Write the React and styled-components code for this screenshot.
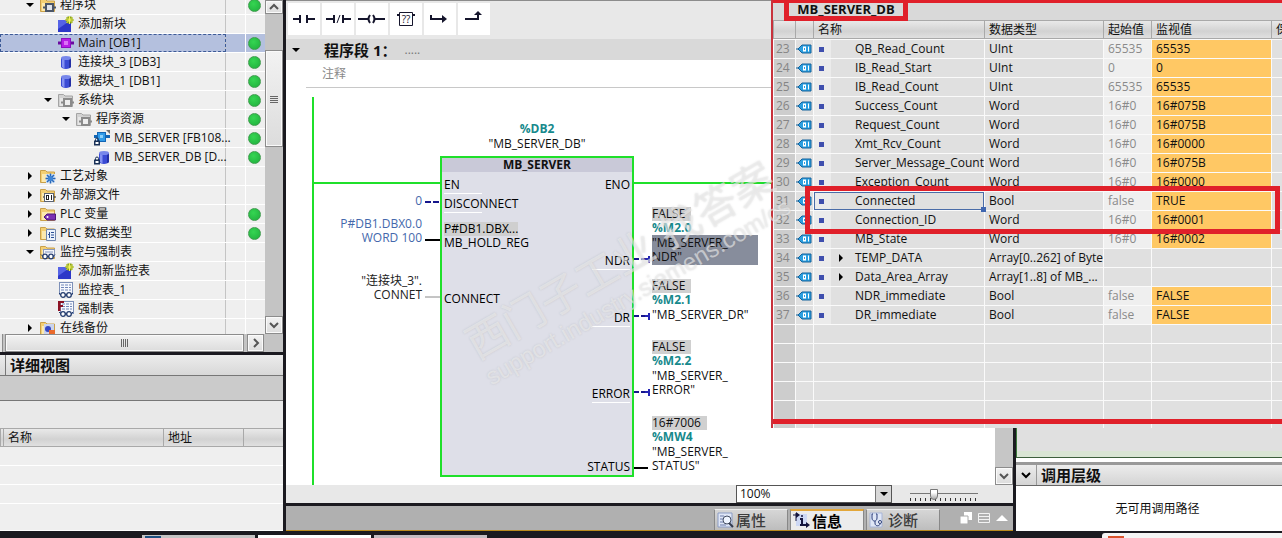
import React from 'react';
import styled, { createGlobalStyle, css } from 'styled-components';

const GREEN = '#1fe02a';
const RED = '#e0202a';

const treeItems = [
  { level: 0, open: true, icon: 'blocks', label: '程序块', dot: true },
  { level: 1, icon: 'add', label: '添加新块' },
  { level: 1, icon: 'ob', label: 'Main [OB1]', dot: true, selected: true },
  { level: 1, icon: 'db', label: '连接块_3 [DB3]', dot: true },
  { level: 1, icon: 'db', label: '数据块_1 [DB1]', dot: true },
  { level: 1, open: true, icon: 'system', label: '系统块', dot: true },
  { level: 2, open: true, icon: 'system', label: '程序资源', dot: true },
  { level: 3, icon: 'fbLocked', label: 'MB_SERVER [FB108...', dot: true },
  { level: 3, icon: 'dbLocked', label: 'MB_SERVER_DB [D...', dot: true },
  { level: 0, open: false, icon: 'tech', label: '工艺对象' },
  { level: 0, open: false, icon: 'source', label: '外部源文件' },
  { level: 0, open: false, icon: 'tags', label: 'PLC 变量', dot: true },
  { level: 0, open: false, icon: 'types', label: 'PLC 数据类型', dot: true },
  { level: 0, open: true, icon: 'watchFolder', label: '监控与强制表' },
  { level: 1, icon: 'add', label: '添加新监控表' },
  { level: 1, icon: 'watch', label: '监控表_1' },
  { level: 1, icon: 'force', label: '强制表' },
  { level: 0, open: false, icon: 'backup', label: '在线备份' },
];

const dbRows = [
  { no: 23, name: 'QB_Read_Count', type: 'UInt', start: '65535', value: '65535' },
  { no: 24, name: 'IB_Read_Start', type: 'UInt', start: '0', value: '0' },
  { no: 25, name: 'IB_Read_Count', type: 'UInt', start: '65535', value: '65535' },
  { no: 26, name: 'Success_Count', type: 'Word', start: '16#0', value: '16#075B' },
  { no: 27, name: 'Request_Count', type: 'Word', start: '16#0', value: '16#075B' },
  { no: 28, name: 'Xmt_Rcv_Count', type: 'Word', start: '16#0', value: '16#0000' },
  { no: 29, name: 'Server_Message_Count', type: 'Word', start: '16#0', value: '16#075B' },
  { no: 30, name: 'Exception_Count', type: 'Word', start: '16#0', value: '16#0000' },
  { no: 31, name: 'Connected', type: 'Bool', start: 'false', value: 'TRUE', active: true },
  { no: 32, name: 'Connection_ID', type: 'Word', start: '16#0', value: '16#0001' },
  { no: 33, name: 'MB_State', type: 'Word', start: '16#0', value: '16#0002' },
  { no: 34, name: 'TEMP_DATA', type: 'Array[0..262] of Byte', expandable: true },
  { no: 35, name: 'Data_Area_Array', type: 'Array[1..8] of MB_...', expandable: true },
  { no: 36, name: 'NDR_immediate', type: 'Bool', start: 'false', value: 'FALSE' },
  { no: 37, name: 'DR_immediate', type: 'Bool', start: 'false', value: 'FALSE' },
];

const blankRows = [0, 1, 2, 3, 4, 5];

const inputPins = [
  { row: 1, label: 'EN', line: true },
  { row: 2, label: 'DISCONNECT', line: true },
  { row: 4, label: 'MB_HOLD_REG', line: true, value: 'P#DB1.DBX...' },
  { row: 7, label: 'CONNECT' },
];

const outputPins = [
  { row: 1, label: 'ENO' },
  { row: 5, label: 'NDR', line: true },
  { row: 8, label: 'DR', line: true },
  { row: 12, label: 'ERROR', line: true },
  { row: 16, label: 'STATUS' },
];

const outputs = [
  { top: 119, value: 'FALSE', address: '%M2.0', tag: ['"MB_SERVER_', 'NDR"'], selected: true },
  { top: 191, value: 'FALSE', address: '%M2.1', tag: ['"MB_SERVER_DR"'] },
  { top: 252, value: 'FALSE', address: '%M2.2', tag: ['"MB_SERVER_', 'ERROR"'] },
  { top: 328, value: '16#7006', address: '%MW4', tag: ['"MB_SERVER_', 'STATUS"'] },
];

/* ---------- icons ---------- */

function Folder({ grey }) {
  return (
    <>
      <path d="M.5 14.500V2.500h5l1.500 1.500h7.500v10.500z" fill={grey ? '#d2d2d2' : '#f3cf73'} stroke={grey ? '#a4a4a4' : '#c9a04a'} />
      <path d="M2 14V6h12v8z" fill={grey ? '#e6e6e6' : '#fbe9b0'} />
    </>
  );
}

function BlockSymbol({ fill, stroke }) {
  return (
    <>
      <path d="M3 10.500h13" stroke={stroke} strokeWidth="2" />
      <rect x="6" y="7" width="7" height="7" fill={fill} stroke={stroke} strokeWidth="2" />
    </>
  );
}

function Glasses({ y = 12 }) {
  return (
    <>
      <circle cx="5" cy={y} r="2.300" fill="#fff" stroke="#243c6e" strokeWidth="1.300" />
      <circle cx="11" cy={y} r="2.300" fill="#fff" stroke="#243c6e" strokeWidth="1.300" />
      <path d={`M7 ${y}h2M13 ${y}l2-2M3 ${y}l-2-2`} stroke="#243c6e" fill="none" />
    </>
  );
}

function Sheet({ x = 1 }) {
  return (
    <>
      <rect x={x + 0.5} y=".5" width="13" height="12" fill="#f6f8fd" stroke="#7d90b8" />
      <path d={`M${x + 2} 3h10M${x + 2} 5.500h10M${x + 2} 8h10`} stroke="#6f85b8" strokeDasharray="3 1" />
    </>
  );
}

function Cylinder() {
  return (
    <>
      <path d="M3 4v8.500c0 3.300 10 3.300 10 0V4z" fill="#3a4bd4" />
      <path d="M4 5v8c.6.700 1.500 1 2.500 1.200V5z" fill="#8492f2" />
      <path d="M11 5v9c1.200-.3 2-.8 2-1.500V4z" fill="#2430a4" />
      <ellipse cx="8" cy="4" rx="5" ry="2" fill="#7787ea" />
    </>
  );
}

function Lock() {
  return (
    <>
      <path d="M1.500 11V9.500a1.500 1.500 0 0 1 3 0V11" fill="none" stroke="#1b3258" />
      <rect x="0" y="10.500" width="6" height="5" fill="#1b3258" />
      <rect x="1.500" y="12" width="3" height="2" fill="#fff" />
    </>
  );
}

const treeIcons = {
  blocks: <><Folder /><BlockSymbol fill="#dfe3ea" stroke="#4b5668" /></>,
  system: <><Folder grey /><BlockSymbol fill="#eee" stroke="#8b8b8b" /></>,
  add: (
    <>
      <path d="M0 4h13v12H0z" fill="#2c37c8" />
      <path d="M0 4h13L0 13z" fill="#5563e6" />
      <path d="M11.500 0v8M7.500 4h8M8.700 1.200l5.600 5.600M14.300 1.200L8.700 6.800" stroke="#7d9a12" strokeWidth="2" />
      <path d="M11.500 0v8M7.500 4h8M8.700 1.200l5.600 5.600M14.300 1.200L8.700 6.800" stroke="#f4f45c" />
    </>
  ),
  ob: (
    <>
      <path d="M0 8h16" stroke="#6a0aa0" strokeWidth="3" />
      <rect x="3.500" y="3.500" width="9" height="9" fill="#b81ee6" stroke="#8c0fc0" />
      <rect x="6" y="6" width="4" height="4" fill="#dd72f7" />
    </>
  ),
  db: <Cylinder />,
  dbLocked: <><g transform="translate(2 0)"><Cylinder /></g><Lock /></>,
  fbLocked: (
    <>
      <path d="M0 6.500h16" stroke="#1265b4" strokeWidth="3" />
      <rect x="3.500" y="2.500" width="8" height="9" fill="#2f9ae8" stroke="#1265b4" />
      <rect x="6" y="5" width="3" height="3" fill="#8bd0fa" />
      <path d="M12 0h4v4z" fill="#6f6f6f" />
      <Lock />
    </>
  ),
  tech: (
    <>
      <Folder />
      <rect x="6" y="6" width="9" height="9" fill="#cfe0f4" />
      <path d="M10.500 5.500v10M5.500 10.500h10M7 7l7 7M14 7l-7 7" stroke="#2867b8" strokeWidth="1.500" />
      <circle cx="10.500" cy="10.500" r="2.500" fill="#3f86d6" />
    </>
  ),
  source: (
    <>
      <Folder />
      <rect x="4.500" y="6.500" width="9" height="8" fill="#fff" stroke="#5b6472" />
      <rect x="6.500" y="8.500" width="2" height="4" fill="none" stroke="#222" />
      <path d="M11.500 8v5M3 10h1M14 10h2" stroke="#222" />
    </>
  ),
  tags: (
    <>
      <Folder />
      <path d="M4 11l3-3h8.500v6H7z" fill="#7a2fb4" stroke="#4c1679" />
      <circle cx="7.500" cy="11" r="1" fill="#fff" />
    </>
  ),
  types: (
    <>
      <Folder />
      <path d="M6.500 4.500h9v11h-9z" fill="#eaf1fb" stroke="#7287ad" />
      <path d="M9.500 7v6M8 9.500h2M11 7.500h3M11 10h3M11 12.500h3" stroke="#2b4f94" fill="none" />
    </>
  ),
  watchFolder: <><Folder /><rect x="3.500" y="5.500" width="11" height="7" fill="#f4f6fb" stroke="#8a99bb" /><path d="M5 8h8" stroke="#8094c0" /><Glasses y={12.500} /></>,
  watch: <><Sheet /><Glasses y={13} /></>,
  force: <><Sheet x={2} /><path d="M0 0h6v2H2.500v2H5v2H2.500v4H0z" fill="#8c1224" /><Glasses y={13} /></>,
  backup: (
    <>
      <Folder />
      <rect x="4" y="4" width="10" height="10" fill="#c9d3ee" />
      <circle cx="8" cy="9" r="3" fill="#3346c4" />
      <rect x="9" y="10" width="6" height="5" fill="#ea6a2c" />
    </>
  ),
};

function Caret({ open }) {
  return (
    <svg width="12" height="12" viewBox="0 0 12 12">
      <path d={open ? 'M2 4h8L6 8z' : 'M4 2v8l4-4z'} fill="#000" />
    </svg>
  );
}

function Chevron({ dir = 'down', color = '#555' }) {
  const paths = { up: 'M2 8l4-4 4 4', down: 'M2 4l4 4 4-4', right: 'M4 2l4 4-4 4' };
  return (
    <svg width="12" height="12" viewBox="0 0 12 12">
      <path d={paths[dir]} fill="none" stroke={color} strokeWidth="2" />
    </svg>
  );
}

const ladderTools = [
  { name: '常开触点', icon: <path d="M5 16h7M20 16h7M12 12v8M19 12v8" /> },
  { name: '常闭触点', icon: <><path d="M4 16h8M22 16h7M12 12v8M21 12v8" /><path d="M15 20l3-8" strokeWidth="1" /></> },
  { name: '线圈', icon: <path d="M2 16h10M19 16h10M14 12q-3 4 0 8M17 12q3 4 0 8" /> },
  { name: '空功能框', icon: <><path d="M9.500 9.500h13v13h-13z" strokeWidth="1" /><path d="M7 12h2M23 12h2" /></>, text: '??' },
  { name: '打开分支', icon: <><path d="M7 12v4h12" /><path d="M18 12l5 4-5 4z" fill="#15152c" stroke="none" /></> },
  { name: '嵌套闭合', icon: <><path d="M7 16h13v-5" /><path d="M16 12l4-4 4 4z" fill="#15152c" stroke="none" /></> },
];

function TagIcon() {
  return (
    <svg width="16" height="10" viewBox="0 0 16 10">
      <path d="M0 5h3M2 5l4-4h9v8H6z" fill="#2b9fe0" stroke="#14629c" />
      <rect x="7.500" y="3" width="2" height="4" fill="none" stroke="#fff" />
      <path d="M12.500 2.500v5" stroke="#fff" />
    </svg>
  );
}

/* ---------- panels ---------- */

function ProjectTree() {
  return (
    <TreeArea>
      <TreeList>
        {treeItems.map((item, index) => (
          <TreeRow key={index} $selected={item.selected}>
            <TreeName $level={item.level} $selected={item.selected}>
              {item.open === undefined ? <TreeSpacer /> : (
                <TreeToggle aria-label={item.label} aria-expanded={item.open}><Caret open={item.open} /></TreeToggle>
              )}
              <svg width="16" height="16" viewBox="0 0 16 16">{treeIcons[item.icon]}</svg>
              <span>{item.label}</span>
            </TreeName>
            <TreeCell />
            <TreeStatus>{item.dot && <StatusDot />}</TreeStatus>
          </TreeRow>
        ))}
      </TreeList>
      <ScrollTrack>
        <ScrollButton aria-label="向上滚动" $height={14}><Chevron dir="up" /></ScrollButton>
        <ScrollThumb><Grip /></ScrollThumb>
        <ScrollButton aria-label="向下滚动" $height={18}><Chevron /></ScrollButton>
      </ScrollTrack>
    </TreeArea>
  );
}

function DetailView() {
  return (
    <Detail>
      <DetailHeader><h2>详细视图</h2></DetailHeader>
      <DetailBar />
      <DetailSpace />
      <DetailTable>
        <colgroup><col width="3" /><col width="160" /><col width="80" /><col /></colgroup>
        <thead><tr><th /><th>名称</th><th>地址</th><th /></tr></thead>
        <tbody>
          {[0, 1, 2, 3].map(row => <tr key={row}><td colSpan="4" /></tr>)}
        </tbody>
      </DetailTable>
    </Detail>
  );
}

function Wires() {
  return (
    <WireLayer>
      <path d="M27 9v388M27 95h128M348 95h160" stroke={GREEN} strokeWidth="2" />
      <path d="M139 114h6M147 114h6M348 171h5M355 171h5M348 228h5M355 228h5M348 304h5M355 304h5" stroke="#16168c" strokeWidth="2" />
      <path d="M359 171h4M363 168v7M359 228h4M363 225v7M359 304h4M363 301v7" stroke="#2525b4" strokeWidth="2" />
      <path d="M139 152h15M348 380h14" stroke="#000" strokeWidth="2" />
      <path d="M139 209h15" stroke="#8a8a8a" strokeWidth="1" />
    </WireLayer>
  );
}

function Pin({ pin, side }) {
  return (
    <PinCell $row={pin.row} $side={side} $line={pin.line}>
      {pin.value && <PinValue>{pin.value}</PinValue>}
      <span>{pin.label}</span>
    </PinCell>
  );
}

function NetworkCanvas() {
  return (
    <Canvas>
      <Wires />
      <InstanceLabel>
        <Address>%DB2</Address>
        <span>"MB_SERVER_DB"</span>
      </InstanceLabel>
      <FunctionBlock>
        <BlockTitle>MB_SERVER</BlockTitle>
        <PinGrid>
          {inputPins.map(pin => <Pin key={pin.label} pin={pin} side="left" />)}
          {outputPins.map(pin => <Pin key={pin.label} pin={pin} side="right" />)}
        </PinGrid>
      </FunctionBlock>
      <InputOperand $top={106} $blue>0</InputOperand>
      <InputOperand $top={129} $blue>P#DB1.DBX0.0<br />WORD 100</InputOperand>
      <InputOperand $top={186}>"连接块_3".<br />CONNET</InputOperand>
      {outputs.map(output => (
        <OutputOperand key={output.address} $top={output.top}>
          <Monitored>{output.value}</Monitored>
          <Address>{output.address}</Address>
          <TagName $selected={output.selected}>
            {output.tag.map(line => <span key={line}>{line}</span>)}
          </TagName>
        </OutputOperand>
      ))}
    </Canvas>
  );
}

function Editor() {
  return (
    <EditorPanel>
      <Toolbar>
        {ladderTools.map(tool => (
          <ToolButton key={tool.name} aria-label={tool.name}>
            <svg width="32" height="32" viewBox="0 0 32 32" fill="none" stroke="#15152c" strokeWidth="2">
              {tool.icon}
              {tool.text && <text x="16" y="20" textAnchor="middle" fontSize="10" fill="#15152c" stroke="none">{tool.text}</text>}
            </svg>
          </ToolButton>
        ))}
      </Toolbar>
      <NetworkHeader>
        <TreeToggle aria-label="折叠程序段" aria-expanded="true"><Caret open /></TreeToggle>
        <h2>程序段 1：</h2>
        <span>.....</span>
      </NetworkHeader>
      <CommentInput aria-label="注释" placeholder="注释" />
      <CanvasRow>
        <NetworkCanvas />
        <CanvasScroll><ScrollButton aria-label="向下滚动" $height={18}><Chevron /></ScrollButton></CanvasScroll>
      </CanvasRow>
      <ZoomBar>
        <ZoomSelectWrap>
          <select aria-label="缩放比例" defaultValue="100%"><option>100%</option></select>
          <i><Caret open /></i>
        </ZoomSelectWrap>
        <ZoomSlider type="range" min="0" max="100" defaultValue="34" aria-label="缩放" />
      </ZoomBar>
      <InspectorBar>
        <TabList role="tablist">
          <Tab role="tab" aria-selected="false">
            <svg width="17" height="17" viewBox="0 0 17 17">
              <path d="M1 1h14v14H1z" fill="#dfe6f6" stroke="#8b9cc4" /><path d="M3 4h4M3 7h3M3 10h3M3 13h6" stroke="#6a7ba8" />
              <circle cx="10" cy="8" r="4" fill="#eef4ff" stroke="#444e63" /><path d="M12 11l4 4" stroke="#333b4c" strokeWidth="2" />
            </svg>
            属性
          </Tab>
          <Tab role="tab" aria-selected="true" $active>
            <svg width="17" height="17" viewBox="0 0 17 17">
              <path d="M3 2h11v12H3z" fill="#cdd8f4" />
              <path d="M0 3h4M3 1v8" stroke="#14143c" strokeWidth="1" />
              <path d="M3 0l4 3-4 3zM13 10l4 3-4 3z" fill="#14143c" />
              <path d="M7 7h2v6M7 13h7" fill="none" stroke="#14143c" strokeWidth="2" />
              <circle cx="9" cy="4" r="1" fill="#14143c" />
            </svg>
            信息
          </Tab>
          <Tab role="tab" aria-selected="false">
            <svg width="17" height="17" viewBox="0 0 17 17">
              <path d="M1 1h12v14H1z" fill="#dfe6f6" stroke="#a8b6d8" />
              <path d="M4 2H3v4c0 4 5 4 5 0V2H7M6 9v2c0 4 5 3 5 1" fill="none" stroke="#2c3f7a" />
              <circle cx="11" cy="10" r="1.500" fill="#fff" stroke="#2c3f7a" />
            </svg>
            诊断
          </Tab>
        </TabList>
        <WindowButtons>
          <button aria-label="浮动"><svg width="12" height="12" viewBox="0 0 12 12"><path d="M4 0h8v8H4z" fill="#fff" /><path d="M0 4h8v8H0z" fill="#fff" stroke="#aaa" /></svg></button>
          <button aria-label="自动折叠"><svg width="12" height="12" viewBox="0 0 12 12"><path d="M.5 1.500h11v9H.500zM0 4.500h12M0 7.500h12" fill="none" stroke="#f2f2f2" /></svg></button>
          <button aria-label="展开"><svg width="12" height="12" viewBox="0 0 12 12"><path d="M0 9l6-6 6 6z" fill="#fff" /></svg></button>
        </WindowButtons>
      </InspectorBar>
    </EditorPanel>
  );
}

function CallHierarchy() {
  return (
    <SidePanel>
      <SideContent />
      <SideHeader>
        <button aria-label="折叠调用层级"><Chevron color="#000" /></button>
        <h2>调用层级</h2>
      </SideHeader>
      <SideMessage>无可用调用路径</SideMessage>
    </SidePanel>
  );
}

function DataBlockWindow() {
  return (
    <DbWindow>
      <DbTitle><h1>MB_SERVER_DB</h1></DbTitle>
      <DbTable>
        <colgroup>
          <col width="22" /><col width="18" /><col width="171" /><col width="119" />
          <col width="48" /><col width="120" /><col />
        </colgroup>
        <thead>
          <tr><th /><th /><th>名称</th><th>数据类型</th><th>起始值</th><th>监视值</th><th>保持</th></tr>
        </thead>
        <tbody>
          {dbRows.map(row => (
            <tr key={row.no}>
              <NumberCell>{row.no}</NumberCell>
              <IconCell><TagIcon /></IconCell>
              <NameCell $active={row.active}>
                <NameInner>
                  <Bullet />
                  <ExpandSlot>{row.expandable && <Caret open={false} />}</ExpandSlot>
                  {row.name}
                </NameInner>
              </NameCell>
              <td>{row.type}</td>
              <StartCell $filled={row.start !== undefined}>{row.start}</StartCell>
              <ValueCell $filled={row.value !== undefined}>{row.value}</ValueCell>
              <td />
            </tr>
          ))}
          {blankRows.map(row => (
            <tr key={row}><NumberCell /><td /><td /><td /><td /><td /><td /></tr>
          ))}
        </tbody>
      </DbTable>
      <HighlightBox />
      <BottomRule />
    </DbWindow>
  );
}

export default function App() {
  return (
    <>
      <GlobalStyle />
      <Shell>
        <Workspace>
          <LeftPanel>
            <ProjectTree />
            <HorizontalScroll>
              <HorizontalThumb><Grip $vertical /></HorizontalThumb>
              <HorizontalButton aria-label="向右滚动"><Chevron dir="right" /></HorizontalButton>
            </HorizontalScroll>
            <DetailView />
          </LeftPanel>
          <Editor />
          <CallHierarchy />
        </Workspace>
        <Taskbar>
          <TaskItem $color="#c4c4c4"><TaskMark $color="#1d4f80" /></TaskItem>
          <TaskItem $color="#ffffff" />
          <TaskItem $color="#c4bcc2" />
          <TaskPopup><TaskMark $color="#d9532c" /></TaskPopup>
        </Taskbar>
        <DataBlockWindow />
        <Watermark aria-hidden="true">
          <strong>西门子工业 找答案</strong>
          <span>support.industry.siemens.com/cs</span>
        </Watermark>
      </Shell>
    </>
  );
}

/* ---------- styles ---------- */

const GlobalStyle = createGlobalStyle`
  * {
    box-sizing: border-box;
  }

  body {
    margin: 0;
    background: #1b1a20;
    color: #111;
    font-family: "Open Sans", "Noto Sans CJK SC", sans-serif;
    font-size: 12px;
    line-height: 14px;
  }

  button, input, select {
    margin: 0;
    padding: 0;
    border: 0;
    background: none;
    color: inherit;
    font: inherit;
  }

  h1, h2, ul {
    margin: 0;
    padding: 0;
    list-style: none;
  }

  svg {
    display: block;
    flex: none;
  }
`;

const raised = css`
  background: linear-gradient(#f2f2f2, #dcdcdc);
  border: 1px solid #8c8c8c;
  box-shadow: inset 0 0 0 1px #fafafa;
`;

const columnHeader = css`
  height: 19px;
  padding: 0 4px;
  background: linear-gradient(#e9e9e9, #d2d2d2 60%, #e0e0e0);
  border: solid #a9a9a9;
  border-width: 1px 0 1px 1px;
  font-weight: 400;
  text-align: left;
  white-space: nowrap;
`;

const Shell = styled.div`
  position: relative;
  display: flex;
  flex-direction: column;
  height: 100vh;
  min-height: 538px;
  overflow: hidden;
`;

const Workspace = styled.main`
  flex: 1;
  min-height: 0;
  display: grid;
  grid-template-columns: 283px minmax(0, 1fr) 266px;
  gap: 3px;
`;

const LeftPanel = styled.aside`
  display: flex;
  flex-direction: column;
  min-height: 0;
  background: #efefef;
`;

const TreeArea = styled.div`
  flex: 1;
  min-height: 0;
  display: flex;
  overflow: hidden;
`;

/* the list is scrolled a few pixels past the top of its first row */
const TreeList = styled.ul`
  flex: 1;
  margin-top: -4px;
`;

const TreeRow = styled.li`
  display: flex;
  height: 19px;
  border-bottom: 1px solid #fff;
  background: ${({ $selected }) => ($selected ? '#b4c0de' : '#efefef')};
`;

const TreeName = styled.div`
  flex: 1;
  display: flex;
  align-items: center;
  gap: 4px;
  padding-left: ${({ $level }) => 24 + $level * 18}px;
  border-right: 1px solid #c4c4c4;
  white-space: nowrap;
  ${({ $selected }) => $selected && 'outline: 1px dashed #3c5a96; outline-offset: -1px;'}

  span {
    width: 0;
  }
`;

const TreeToggle = styled.button`
  width: 12px;
  height: 12px;
`;

const TreeSpacer = styled.i`
  width: 12px;
`;

const TreeCell = styled.div`
  width: 20px;
  border-right: 1px solid #fff;
`;

const TreeStatus = styled.div`
  width: 19px;
  padding-right: 2px;
  display: grid;
  place-items: center;
`;

const StatusDot = styled.i`
  width: 13px;
  height: 13px;
  border-radius: 50%;
  border: 1px solid #3f9d4e;
  background: radial-gradient(circle at 40% 35%, #35d552, #1fae3c);
`;

const ScrollTrack = styled.div`
  width: 18px;
  display: flex;
  flex-direction: column;
  justify-content: space-between;
  background: #c4c4c4;
`;

const ScrollButton = styled.button`
  ${raised}
  width: 18px;
  height: ${({ $height }) => $height}px;
  display: grid;
  place-items: center;
`;

const ScrollThumb = styled.div`
  ${raised}
  height: 97px;
  margin: 36px 0 auto;
  display: grid;
  place-items: center;
`;

const Grip = styled.i`
  width: 8px;
  height: 8px;
  background: repeating-linear-gradient(${({ $vertical }) => ($vertical ? '90deg' : '0deg')}, #666 0 1px, transparent 1px 2px);
`;

const HorizontalScroll = styled.div`
  height: 18px;
  display: flex;
  gap: 3px;
  padding: 0 19px 0 5px;
  background: linear-gradient(90deg, #e8e8e8 2px, #8c8c8c 2px 3px, #c4c4c4 3px);
`;

const HorizontalThumb = styled.div`
  ${raised}
  flex: 1;
  display: grid;
  place-items: center;
`;

const HorizontalButton = styled.button`
  ${raised}
  width: 17px;
  display: grid;
  place-items: center;
`;

const Detail = styled.section`
  border-top: 3px solid #1b1a20;
`;

const DetailHeader = styled.header`
  height: 21px;
  padding-left: 5px;
  display: flex;
  background: linear-gradient(#ececec, #d8d8d8);
  border-bottom: 1px solid #777;

  h2 {
    border-left: 1px solid #777;
    padding-left: 4px;
    font-size: 15px;
    line-height: 20px;
  }
`;

const DetailBar = styled.div`
  height: 25px;
  background: #cbcbcb;
  border-bottom: 1px solid #777;
`;

const DetailSpace = styled.div`
  height: 27px;
  background: #e9e9e9;
`;

const DetailTable = styled.table`
  width: 100%;
  table-layout: fixed;
  border-collapse: separate;
  border-spacing: 0;

  th {
    ${columnHeader}
  }

  th:first-child {
    padding: 0;
  }

  td {
    height: 19px;
    padding: 0;
    background: #efefef;
    border-bottom: 1px solid #fff;
  }

  tr:last-child td {
    height: 27px;
  }
`;

const EditorPanel = styled.section`
  display: flex;
  flex-direction: column;
  min-width: 0;
  min-height: 0;
  background: #fff;
`;

const Toolbar = styled.div`
  display: flex;
  gap: 2px;
  padding: 2px 2px 4px;
  background: #e8e8e8;
  border-top: 1px solid #8c8c8c;
`;

const ToolButton = styled.button`
  width: 32px;
  height: 32px;
  background: #fff;
`;

const NetworkHeader = styled.header`
  height: 21px;
  display: flex;
  align-items: center;
  padding-left: 4px;
  background: #d9d9d9;

  h2 {
    margin: 0 8px 0 22px;
    font-size: 15px;
    line-height: 20px;
  }

  span {
    color: #777;
  }
`;

const CommentInput = styled.input`
  height: 28px;
  margin-left: 20px;
  padding: 0 16px;
  border-bottom: 1px solid #c8c8c8;

  &::placeholder {
    color: #8a8a8a;
  }
`;

const CanvasRow = styled.div`
  flex: 1;
  min-height: 0;
  display: flex;
`;

const Canvas = styled.div`
  position: relative;
  flex: 1;
  overflow: hidden;
`;

const CanvasScroll = styled.div`
  width: 18px;
  display: flex;
  align-items: flex-end;
  background: #c6c6c6;
`;

const WireLayer = styled.svg`
  position: absolute;
  inset: 0;
  width: 100%;
  height: 100%;
`;

const InstanceLabel = styled.div`
  position: absolute;
  left: 154px;
  top: 34px;
  width: 194px;
  display: flex;
  flex-direction: column;
  align-items: center;
  gap: 1px;
`;

const Address = styled.span`
  color: #16898c;
  font-weight: 700;
`;

const FunctionBlock = styled.div`
  position: absolute;
  left: 154px;
  top: 68px;
  width: 194px;
  border: 2px solid ${GREEN};
  background: #dedfe8;
`;

const BlockTitle = styled.div`
  height: 14px;
  margin-bottom: 3px;
  background: #c9c9d8;
  font-weight: 700;
  text-align: center;
`;

const PinGrid = styled.div`
  display: grid;
  grid-template-columns: 1fr 1fr;
  grid-template-rows: repeat(15, 19px) 15px;
  padding: 0 2px;
`;

const PinCell = styled.div`
  grid-row: ${({ $row }) => $row};
  grid-column: ${({ $side }) => ($side === 'left' ? 1 : 2)};
  display: flex;
  flex-direction: column;
  justify-content: flex-end;
  align-items: ${({ $side }) => ($side === 'left' ? 'flex-start' : 'flex-end')};
  color: #000;
  white-space: nowrap;

  &::after {
    content: '';
    width: 38px;
    height: 1px;
    margin-top: 1px;
    background: ${({ $line }) => ($line ? '#fff' : 'transparent')};
  }
`;

const PinValue = styled.span`
  width: 74px;
  background: #cfcfcf;
`;

const InputOperand = styled.div`
  position: absolute;
  left: 20px;
  top: ${({ $top }) => $top}px;
  width: 116px;
  color: ${({ $blue }) => ($blue ? '#4468ac' : '#222')};
  text-align: right;
`;

const OutputOperand = styled.div`
  position: absolute;
  left: 366px;
  top: ${({ $top }) => $top}px;
  display: flex;
  flex-direction: column;
  align-items: flex-start;
`;

const Monitored = styled.span`
  padding-right: 6px;
  background: #d0d0d0;
`;

const TagName = styled.div`
  display: flex;
  flex-direction: column;
  width: 106px;
  padding: 1px 0;
  background: ${({ $selected }) => ($selected ? '#878d9c' : 'transparent')};
`;

const ZoomBar = styled.div`
  height: 18px;
  display: flex;
  justify-content: flex-end;
  gap: 18px;
  padding-right: 35px;
  background: #e8e8e8;
`;

const ZoomSelectWrap = styled.div`
  display: grid;
  grid-template-columns: 1fr 16px;
  width: 156px;
  background: #fff;
  border: 1px solid #555;

  select {
    grid-area: 1 / 1 / 2 / 3;
    appearance: none;
    padding-left: 3px;
  }

  i {
    grid-area: 1 / 2;
    display: grid;
    place-items: center;
    background: #d8d8d8;
    border-left: 1px solid #777;
    pointer-events: none;
  }
`;

const ZoomSlider = styled.input`
  appearance: none;
  width: 68px;
  height: 18px;
  background:
    linear-gradient(#777, #777) 0 8px / 100% 1px no-repeat,
    repeating-linear-gradient(90deg, #333 0 1px, transparent 1px 5px) 0 13px / 100% 3px no-repeat;

  &::-webkit-slider-thumb {
    appearance: none;
    width: 8px;
    height: 11px;
    background: linear-gradient(#fff 30%, #aaa);
    border: 1px solid #777;
    border-radius: 0 0 4px 4px;
  }
`;

const InspectorBar = styled.div`
  height: 28px;
  display: flex;
  align-items: flex-end;
  justify-content: flex-end;
  gap: 20px;
  padding-right: 5px;
  background: #b0b0b0;
  border-top: 3px solid #1b1a20;
  border-bottom: 1px solid #b98a1e;
`;

const TabList = styled.div`
  display: flex;
  gap: 2px;
`;

const Tab = styled.button`
  width: 74px;
  height: 21px;
  display: flex;
  align-items: center;
  gap: 2px;
  padding-left: 2px;
  background: ${({ $active }) => ($active ? '#ececec' : 'linear-gradient(#d6d6d6, #bdbdbd)')};
  border: 1px solid #888;
  border-bottom: 0;
  border-top: ${({ $active }) => ($active ? '2px solid #e3a73a' : '1px solid #eee')};
  color: ${({ $active }) => ($active ? '#000' : '#3c3c3c')};
  font-size: 15px;
  font-weight: ${({ $active }) => ($active ? 700 : 500)};
`;

const WindowButtons = styled.div`
  display: flex;
  gap: 6px;
  padding-bottom: 6px;
`;

const SidePanel = styled.aside`
  display: flex;
  flex-direction: column;
  background: #fff;
`;

const SideContent = styled.div`
  flex: 1;
  background: #e0e0e0;
  border-left: 1px solid #3d7a3d;
  border-bottom: 1px solid #3d5f3d;
  box-shadow: inset 0 -6px 0 #d9e5d4;
`;

const SideHeader = styled.header`
  height: 24px;
  margin-top: 4px;
  display: flex;
  align-items: center;
  background: linear-gradient(#ececec, #d4d4d4);
  border-top: 3px solid #999;
  border-bottom: 1px solid #666;

  button {
    width: 20px;
    display: grid;
    place-items: center;
  }

  h2 {
    padding-left: 4px;
    border-left: 1px solid #999;
    font-size: 15px;
    line-height: 20px;
  }
`;

const SideMessage = styled.p`
  height: 45px;
  margin: 0;
  padding-left: 17px;
  line-height: 45px;
  text-align: center;
`;

const Taskbar = styled.footer`
  height: 7px;
  display: flex;
  align-items: flex-end;
  gap: 3px;
  padding-left: 142px;
  background: #1b1a20;
`;

const TaskItem = styled.div`
  width: 113px;
  height: 3px;
  padding: 1px 0 0 3px;
  background: ${({ $color }) => $color};
`;

const TaskMark = styled.i`
  display: block;
  width: 16px;
  height: 2px;
  background: ${({ $color }) => $color};
`;

const TaskPopup = styled.div`
  width: 180px;
  height: 5px;
  margin-left: auto;
  padding: 3px 0 0 6px;
  background: #f4f4f4;
  border-radius: 3px 0 0 0;
`;

const DbWindow = styled.section`
  position: absolute;
  top: 0;
  right: 0;
  width: 511px;
  height: 428px;
  overflow: hidden;
  background: #d9d9d9;
  border-left: 2px solid #c8323c;
`;

const DbTitle = styled.header`
  height: 20px;
  padding-left: 11px;
  border-top: 3px solid ${RED};

  h1 {
    position: relative;
    z-index: 1;
    width: 124px;
    height: 18px;
    border: 5px solid ${RED};
    border-top-width: 0;
    font-size: 13px;
    line-height: 12px;
    text-align: center;
  }
`;

const DbTable = styled.table`
  width: 100%;
  table-layout: fixed;
  border-collapse: separate;
  border-spacing: 0;

  th {
    ${columnHeader}
    overflow: hidden;
  }

  td {
    height: 19px;
    padding: 0 4px;
    background: #e0e0e0;
    border: solid #fafafa;
    border-width: 1px 0 0 1px;
    white-space: nowrap;
  }
`;

const NumberCell = styled.td`
  && {
    padding: 0 0 0 2px;
    background: #cdcdcd;
    color: #858585;
  }
`;

const IconCell = styled.td`
  && {
    padding: 0;
  }
`;

const NameCell = styled.td`
  && {
    position: relative;
    padding: 0;
    background: linear-gradient(90deg, #ebebeb 17px, #e0e0e0 17px);
    ${({ $active }) => $active && 'box-shadow: inset 0 0 0 1px #4a6ca8;'}
  }

  &::after {
    content: '';
    display: ${({ $active }) => ($active ? 'block' : 'none')};
    position: absolute;
    right: -2px;
    bottom: -2px;
    z-index: 1;
    width: 5px;
    height: 5px;
    background: #3f66b0;
  }
`;

const NameInner = styled.div`
  display: flex;
  align-items: center;
  padding-left: 5px;
`;

const Bullet = styled.i`
  width: 5px;
  height: 5px;
  margin-right: 11px;
  background: #3f4fae;
`;

const ExpandSlot = styled.span`
  width: 20px;
`;

const StartCell = styled.td`
  && {
    background: ${({ $filled }) => ($filled ? '#efefef' : '#e0e0e0')};
    color: #8a8a8a;
  }
`;

const ValueCell = styled.td`
  && {
    background: ${({ $filled }) => ($filled ? '#ffc864' : '#e0e0e0')};
  }
`;

const HighlightBox = styled.div`
  position: absolute;
  top: 186px;
  left: 32px;
  right: 2px;
  height: 48px;
  border: 5px solid ${RED};
`;

const BottomRule = styled.div`
  position: absolute;
  left: 0;
  right: 0;
  bottom: 4px;
  height: 5px;
  background: ${RED};
`;

const Watermark = styled.div`
  position: absolute;
  left: 494px;
  top: 320px;
  display: flex;
  flex-direction: column;
  color: rgba(240, 240, 240, 0.6);
  font-family: "Liberation Sans", "Noto Sans CJK SC", sans-serif;
  font-size: 24px;
  line-height: 26px;
  text-shadow: 0 0 2px rgba(120, 120, 120, 0.25);
  white-space: nowrap;
  pointer-events: none;
  transform: rotate(-30deg);
  transform-origin: left bottom;

  strong {
    font-size: 42px;
    font-weight: 400;
    line-height: 44px;
  }
`;
